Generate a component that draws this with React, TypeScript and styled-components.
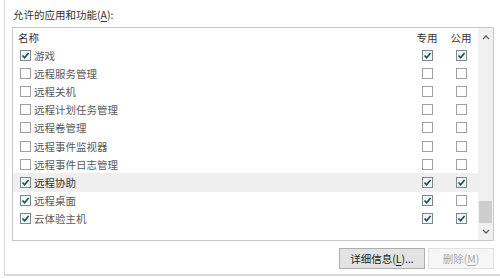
import React from "react";
import styled, { createGlobalStyle } from "styled-components";

const GlobalStyle = createGlobalStyle`
  html, body {
    margin: 0;
    padding: 0;
    background: #ffffff;
  }
  body {
    font-family: "Noto Sans CJK SC", "Noto Sans", sans-serif;
    color: #333;
  }
`;

interface Feature {
  name: string;
  on: boolean;
  priv: boolean;
  pub: boolean;
}

const features: Feature[] = [
  { name: "游戏", on: true, priv: true, pub: true },
  { name: "远程服务管理", on: false, priv: false, pub: false },
  { name: "远程关机", on: false, priv: false, pub: false },
  { name: "远程计划任务管理", on: false, priv: false, pub: false },
  { name: "远程卷管理", on: false, priv: false, pub: false },
  { name: "远程事件监视器", on: false, priv: false, pub: false },
  { name: "远程事件日志管理", on: false, priv: false, pub: false },
  { name: "远程协助", on: true, priv: true, pub: true },
  { name: "远程桌面", on: true, priv: true, pub: false },
  { name: "云体验主机", on: true, priv: true, pub: true },
];

const SELECTED = 7;

function Check({ checked }: { checked: boolean }) {
  return (
    <Box $checked={checked}>
      {checked && (
        <svg width="9" height="9" viewBox="0 0 9 9">
          <polyline points="1.5,4.5 3.6,6.8 7.6,2" fill="none" stroke="#1f4d4d" strokeWidth="1.6" />
        </svg>
      )}
    </Box>
  );
}

function Arrow({ up }: { up: boolean }) {
  return (
    <svg width="8" height="6" viewBox="0 0 8 6">
      <polyline
        points={up ? "1,5 4,2 7,5" : "1,1 4,4 7,1"}
        fill="none"
        stroke="#606060"
        strokeWidth="1.3"
      />
    </svg>
  );
}

function App() {
  return (
    <Page>
      <GlobalStyle />
      <Group>
        <Title>
          允许的应用和功能(<u>A</u>):
        </Title>
        <ListBox>
          <ListMain>
            <HeaderRow>
              <HeadCell $align="left">名称</HeadCell>
              <HeadCell $align="center">专用</HeadCell>
              <HeadCell $align="center">公用</HeadCell>
            </HeaderRow>
            {features.map((f, i) => (
              <Row key={f.name} $selected={i === SELECTED}>
                <NameCell $selected={i === SELECTED}>
                  <Check checked={f.on} />
                  <span>{f.name}</span>
                </NameCell>
                <CheckCell>
                  <Check checked={f.priv} />
                </CheckCell>
                <CheckCell>
                  <Check checked={f.pub} />
                </CheckCell>
              </Row>
            ))}
          </ListMain>
          <ScrollBar>
            <ArrowBtn>
              <Arrow up />
            </ArrowBtn>
            <Track>
              <Thumb />
            </Track>
            <ArrowBtn>
              <Arrow up={false} />
            </ArrowBtn>
          </ScrollBar>
        </ListBox>
        <ButtonRow>
          <Button $width={86}>
            详细信息(<u>L</u>)...
          </Button>
          <Button $width={66} $disabled>
            删除(<u>M</u>)
          </Button>
        </ButtonRow>
      </Group>
    </Page>
  );
}

const Page = styled.div`
  width: 500px;
  height: 279px;
  padding-left: 4px;
  box-sizing: border-box;
  background: #ffffff;
  overflow: hidden;
`;

const Group = styled.div`
  height: 276px;
  box-sizing: border-box;
  border-left: 1px solid #d9d9d9;
  border-bottom: 2px solid #dadada;
  padding: 7px 0 0 7px;
`;

const Title = styled.div`
  height: 16px;
  line-height: 16px;
  margin: 0 0 4px 1px;
  font-size: 10.5px;
  color: #333333;

  u {
    text-underline-offset: 2px;
  }
`;

const ListBox = styled.div`
  width: 482px;
  height: 214px;
  box-sizing: border-box;
  border: 1px solid #c8c8c8;
  display: flex;
  background: #ffffff;
`;

const ListMain = styled.div`
  flex: 1;
  display: flex;
  flex-direction: column;
`;

const HeaderRow = styled.div`
  display: grid;
  grid-template-columns: 1fr 34px 34px;
  height: 18px;
  align-items: center;
`;

const HeadCell = styled.div<{ $align: "left" | "center" }>`
  font-size: 10.5px;
  color: #333333;
  text-align: ${(p) => p.$align};
  padding-left: ${(p) => (p.$align === "left" ? "5px" : "0")};
`;

const Row = styled.div<{ $selected: boolean }>`
  display: grid;
  grid-template-columns: 1fr 34px 34px;
  height: 18.2px;
  align-items: center;
  background: ${(p) => (p.$selected ? "#efefef" : "transparent")};
`;

const NameCell = styled.div<{ $selected: boolean }>`
  display: flex;
  align-items: center;
  gap: 3px;
  padding-left: 7px;
  font-size: 10.5px;
  color: ${(p) => (p.$selected ? "#333333" : "#5a5a5a")};
`;

const CheckCell = styled.div`
  display: flex;
  justify-content: center;
`;

const Box = styled.span<{ $checked: boolean }>`
  display: inline-flex;
  align-items: center;
  justify-content: center;
  width: 11px;
  height: 11px;
  box-sizing: border-box;
  border: 1px solid ${(p) => (p.$checked ? "#7a8a8a" : "#a0a0a0")};
  background: ${(p) => (p.$checked ? "#eef6f6" : "#ffffff")};
`;

const ScrollBar = styled.div`
  width: 15px;
  display: flex;
  flex-direction: column;
  background: #f0f0f0;
`;

const ArrowBtn = styled.div`
  height: 17px;
  display: flex;
  align-items: center;
  justify-content: center;
`;

const Track = styled.div`
  flex: 1;
  display: flex;
  flex-direction: column;
  justify-content: flex-end;
  padding: 0 1px;
`;

const Thumb = styled.div`
  height: 22px;
  background: #cdcdcd;
`;

const ButtonRow = styled.div`
  width: 482px;
  display: flex;
  justify-content: flex-end;
  gap: 3px;
  margin-top: 7px;
`;

const Button = styled.div<{ $width: number; $disabled?: boolean }>`
  width: ${(p) => p.$width}px;
  height: 21px;
  box-sizing: border-box;
  display: flex;
  align-items: center;
  justify-content: center;
  font-size: 10.5px;
  border: 1px solid ${(p) => (p.$disabled ? "#e0e0e0" : "#adadad")};
  background: ${(p) => (p.$disabled ? "#f6f6f6" : "#e3e3e3")};
  color: ${(p) => (p.$disabled ? "#a8a8a8" : "#1e1e1e")};

  u {
    text-underline-offset: 2px;
  }
`;

export default App;
